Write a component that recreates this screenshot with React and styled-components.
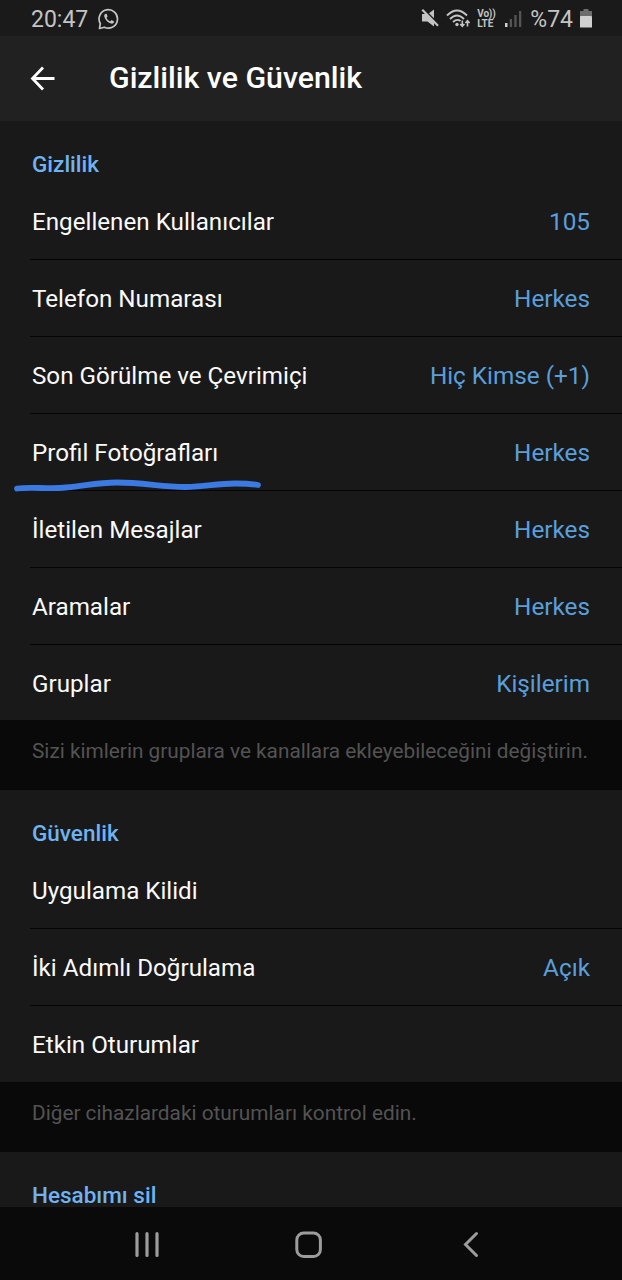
import React from "react";
import styled, { createGlobalStyle } from "styled-components";

const GlobalStyle = createGlobalStyle`
  * {
    box-sizing: border-box;
  }
  body {
    margin: 0;
    background: #090909;
  }
`;

const Screen = styled.div`
  width: 622px;
  height: 1280px;
  display: flex;
  flex-direction: column;
  overflow: hidden;
  background: #090909;
  color: #fafafa;
  font-family: Roboto, sans-serif;
`;

const StatusBar = styled.div`
  height: 36px;
  flex-shrink: 0;
  display: flex;
  align-items: center;
  justify-content: space-between;
  padding: 2px 30px 0 31px;
  background: #1a1a1a;
  color: #c4c4c4;
  font-size: 23px;
`;

const StatusGroup = styled.div`
  display: flex;
  align-items: center;
`;

const StatusIcon = styled.svg`
  display: block;
  margin-left: ${(props) => props.$gap}px;
  margin-bottom: ${(props) => props.$lift || 0}px;
`;

const VoLte = styled.div`
  display: flex;
  flex-direction: column;
  width: 18px;
  margin-left: 6px;
  font-size: 10px;
  font-weight: 700;
  line-height: 10px;
  white-space: nowrap;
`;

const VoLine = styled.span`
  letter-spacing: -0.2px;
`;

const Battery = styled.span`
  margin-left: 8px;
`;

const Header = styled.header`
  height: 85px;
  flex-shrink: 0;
  display: flex;
  align-items: center;
  padding-left: 30px;
  background: #212122;
`;

const Title = styled.h1`
  margin: -2px 0 0 54px;
  font-size: 30.3px;
  font-weight: 500;
  line-height: 36px;
  color: #ffffff;
`;

const Content = styled.main`
  flex: 1;
  min-height: 0;
  overflow: hidden;
`;

const Section = styled.section`
  background: #191919;
`;

const SectionTitle = styled.h2`
  height: 62px;
  margin: 0;
  padding: 28px 32px 0;
  font-size: 22.5px;
  font-weight: 500;
  line-height: 30px;
  color: #6fb3f2;
`;

const Row = styled.div`
  position: relative;
  height: 77px;
  margin-left: 30px;
  padding: 24px 32px 0 2px;
  display: flex;
  align-items: flex-start;
  justify-content: space-between;
  border-bottom: 1px solid #050505;
  font-size: 24.2px;
  line-height: 30px;

  &:last-child {
    height: ${(props) => props.$lastHeight}px;
    border-bottom: none;
  }
`;

const Value = styled.span`
  font-size: 24.3px;
  color: #5a9fdc;
`;

const Hint = styled.p`
  height: 70px;
  margin: 0;
  padding: 16px 32px 0;
  font-size: 20.8px;
  line-height: 30px;
  color: #535353;
  white-space: nowrap;
`;

const Underline = styled.svg`
  position: absolute;
  left: -18px;
  bottom: -5px;
`;

const NavBar = styled.nav`
  height: 73px;
  flex-shrink: 0;
  display: flex;
  align-items: center;
  padding: 2px 0 0 133px;
  background: #0a0a0a;
`;

const NavIcon = styled.svg`
  display: block;
  margin-left: ${(props) => props.$gap || 0}px;
`;

const privacyRows = [
  { label: "Engellenen Kullanıcılar", value: "105" },
  { label: "Telefon Numarası", value: "Herkes" },
  { label: "Son Görülme ve Çevrimiçi", value: "Hiç Kimse (+1)" },
  { label: "Profil Fotoğrafları", value: "Herkes", marked: true },
  { label: "İletilen Mesajlar", value: "Herkes" },
  { label: "Aramalar", value: "Herkes" },
  { label: "Gruplar", value: "Kişilerim" },
];

const securityRows = [
  { label: "Uygulama Kilidi" },
  { label: "İki Adımlı Doğrulama", value: "Açık" },
  { label: "Etkin Oturumlar" },
];

const PenUnderline = () => (
  <Underline width="252" height="16" viewBox="0 0 252 16" fill="none">
    <path
      d="M5 9.500C20 7.500 37 10.500 54 8.500C75 6.500 85 3.500 105 3.500C131 3.500 150 8 173 8C194 8 203 4.500 223 4.500C232 4.500 240 5 246 6"
      stroke="#3a7ae2"
      strokeWidth="5.800"
      strokeLinecap="round"
    />
  </Underline>
);

const SettingRows = ({ rows, lastHeight }) => (
  <div>
    {rows.map(({ label, value, marked }) => (
      <Row key={label} $lastHeight={lastHeight}>
        <span>{label}</span>
        {value && <Value>{value}</Value>}
        {marked && <PenUnderline />}
      </Row>
    ))}
  </div>
);

const App = () => {
  return (
    <Screen>
      <GlobalStyle />
      <StatusBar>
        <StatusGroup>
          <span>20:47</span>
          <StatusIcon $gap={10} $lift={1} width="22" height="22" viewBox="0 0 22 22" fill="none">
            <path
              d="M2.300 15.500A9.200 9.200 0 1 1 6.300 19.200L1.500 20.500Z"
              stroke="#c4c4c4"
              strokeWidth="1.700"
              strokeLinejoin="round"
            />
            <path
              d="M7.700 5.700C6.500 6 5.900 7.300 6.400 8.900C7.400 12.200 10 14.800 13.200 15.600C14.700 15.900 16 15.100 16.200 13.600L13.500 12.100L12.200 13.400C10.500 12.700 9.200 11.400 8.500 9.700L9.600 8.500L8.600 5.800Z"
              fill="#c4c4c4"
            />
          </StatusIcon>
        </StatusGroup>
        <StatusGroup>
          <StatusIcon $gap={0} $lift={2} width="18" height="18" viewBox="0 0 18 18">
            <path d="M1 5H5.500L13 12.500V17.500L6.500 12.500H1Z" fill="#c4c4c4" />
            <path d="M8 4.300L13 .5V9.300Z" fill="#c4c4c4" />
            <path d="M1.300 .8L17 16.800" stroke="#c4c4c4" strokeWidth="2.200" />
          </StatusIcon>
          <StatusIcon $gap={7} $lift={1} width="25" height="20" viewBox="0 0 25 20" fill="none">
            <path
              d="M1 6.500Q11 -3.500 21 6.500M4 10Q11 3 18 10M7 13Q11 9.300 14.500 12"
              stroke="#c4c4c4"
              strokeWidth="1.900"
            />
            <circle cx="11" cy="15.500" r="1.700" fill="#c4c4c4" />
            <path
              d="M16.300 11.500V17M14.200 15L16.300 17.300L18.400 15M21.500 17.500V12M19.400 14L21.500 11.700L23.600 14"
              stroke="#c4c4c4"
              strokeWidth="1.600"
            />
          </StatusIcon>
          <VoLte>
            <VoLine>Vo))</VoLine>
            <span>LTE</span>
          </VoLte>
          <StatusIcon $gap={10} width="17" height="18" viewBox="0 0 17 18">
            <rect x="0" y="13" width="2.500" height="4" fill="#d0d0d0" />
            <rect x="4.700" y="9" width="2.300" height="8" fill="#555" />
            <rect x="9.300" y="5" width="2.300" height="12" fill="#555" />
            <rect x="14" y="1" width="2.300" height="16" fill="#555" />
          </StatusIcon>
          <Battery>%74</Battery>
          <StatusIcon $gap={7} $lift={2} width="12" height="19" viewBox="0 0 12 19">
            <path d="M3.500 0H8.500V2H12V7H0V2H3.500Z" fill="#6d6d6d" />
            <rect y="7" width="12" height="11.500" rx=".6" fill="#d0d0d0" />
          </StatusIcon>
        </StatusGroup>
      </StatusBar>
      <Header>
        <svg width="25" height="25" viewBox="0 0 25 25" fill="none">
          <path
            d="M24.500 12.500H3M13 1.500L2.500 12.500L13 23.500"
            stroke="#fff"
            strokeWidth="2.800"
          />
        </svg>
        <Title>Gizlilik ve Güvenlik</Title>
      </Header>
      <Content>
        <Section>
          <SectionTitle>Gizlilik</SectionTitle>
          <SettingRows rows={privacyRows} lastHeight={75} />
        </Section>
        <Hint>Sizi kimlerin gruplara ve kanallara ekleyebileceğini değiştirin.</Hint>
        <Section>
          <SectionTitle>Güvenlik</SectionTitle>
          <SettingRows rows={securityRows} lastHeight={76} />
        </Section>
        <Hint>Diğer cihazlardaki oturumları kontrol edin.</Hint>
        <Section>
          <SectionTitle>Hesabımı sil</SectionTitle>
        </Section>
      </Content>
      <NavBar>
        <NavIcon width="28" height="28" viewBox="0 0 28 28">
          <path
            d="M4 2.500V24.500M14 2.500V24.500M24 2.500V24.500"
            stroke="#9c9c9c"
            strokeWidth="3.200"
            strokeLinecap="round"
          />
        </NavIcon>
        <NavIcon $gap={132} width="30" height="30" viewBox="0 0 30 30" fill="none">
          <rect x="3.800" y="3" width="23.600" height="23.600" rx="7" stroke="#9c9c9c" strokeWidth="3" />
        </NavIcon>
        <NavIcon $gap={132} width="28" height="28" viewBox="0 0 28 28" fill="none">
          <path
            d="M21.500 2.500L10.500 13.500L21.500 24.500"
            stroke="#9c9c9c"
            strokeWidth="3"
            strokeLinecap="round"
          />
        </NavIcon>
      </NavBar>
    </Screen>
  );
};

export default App;
